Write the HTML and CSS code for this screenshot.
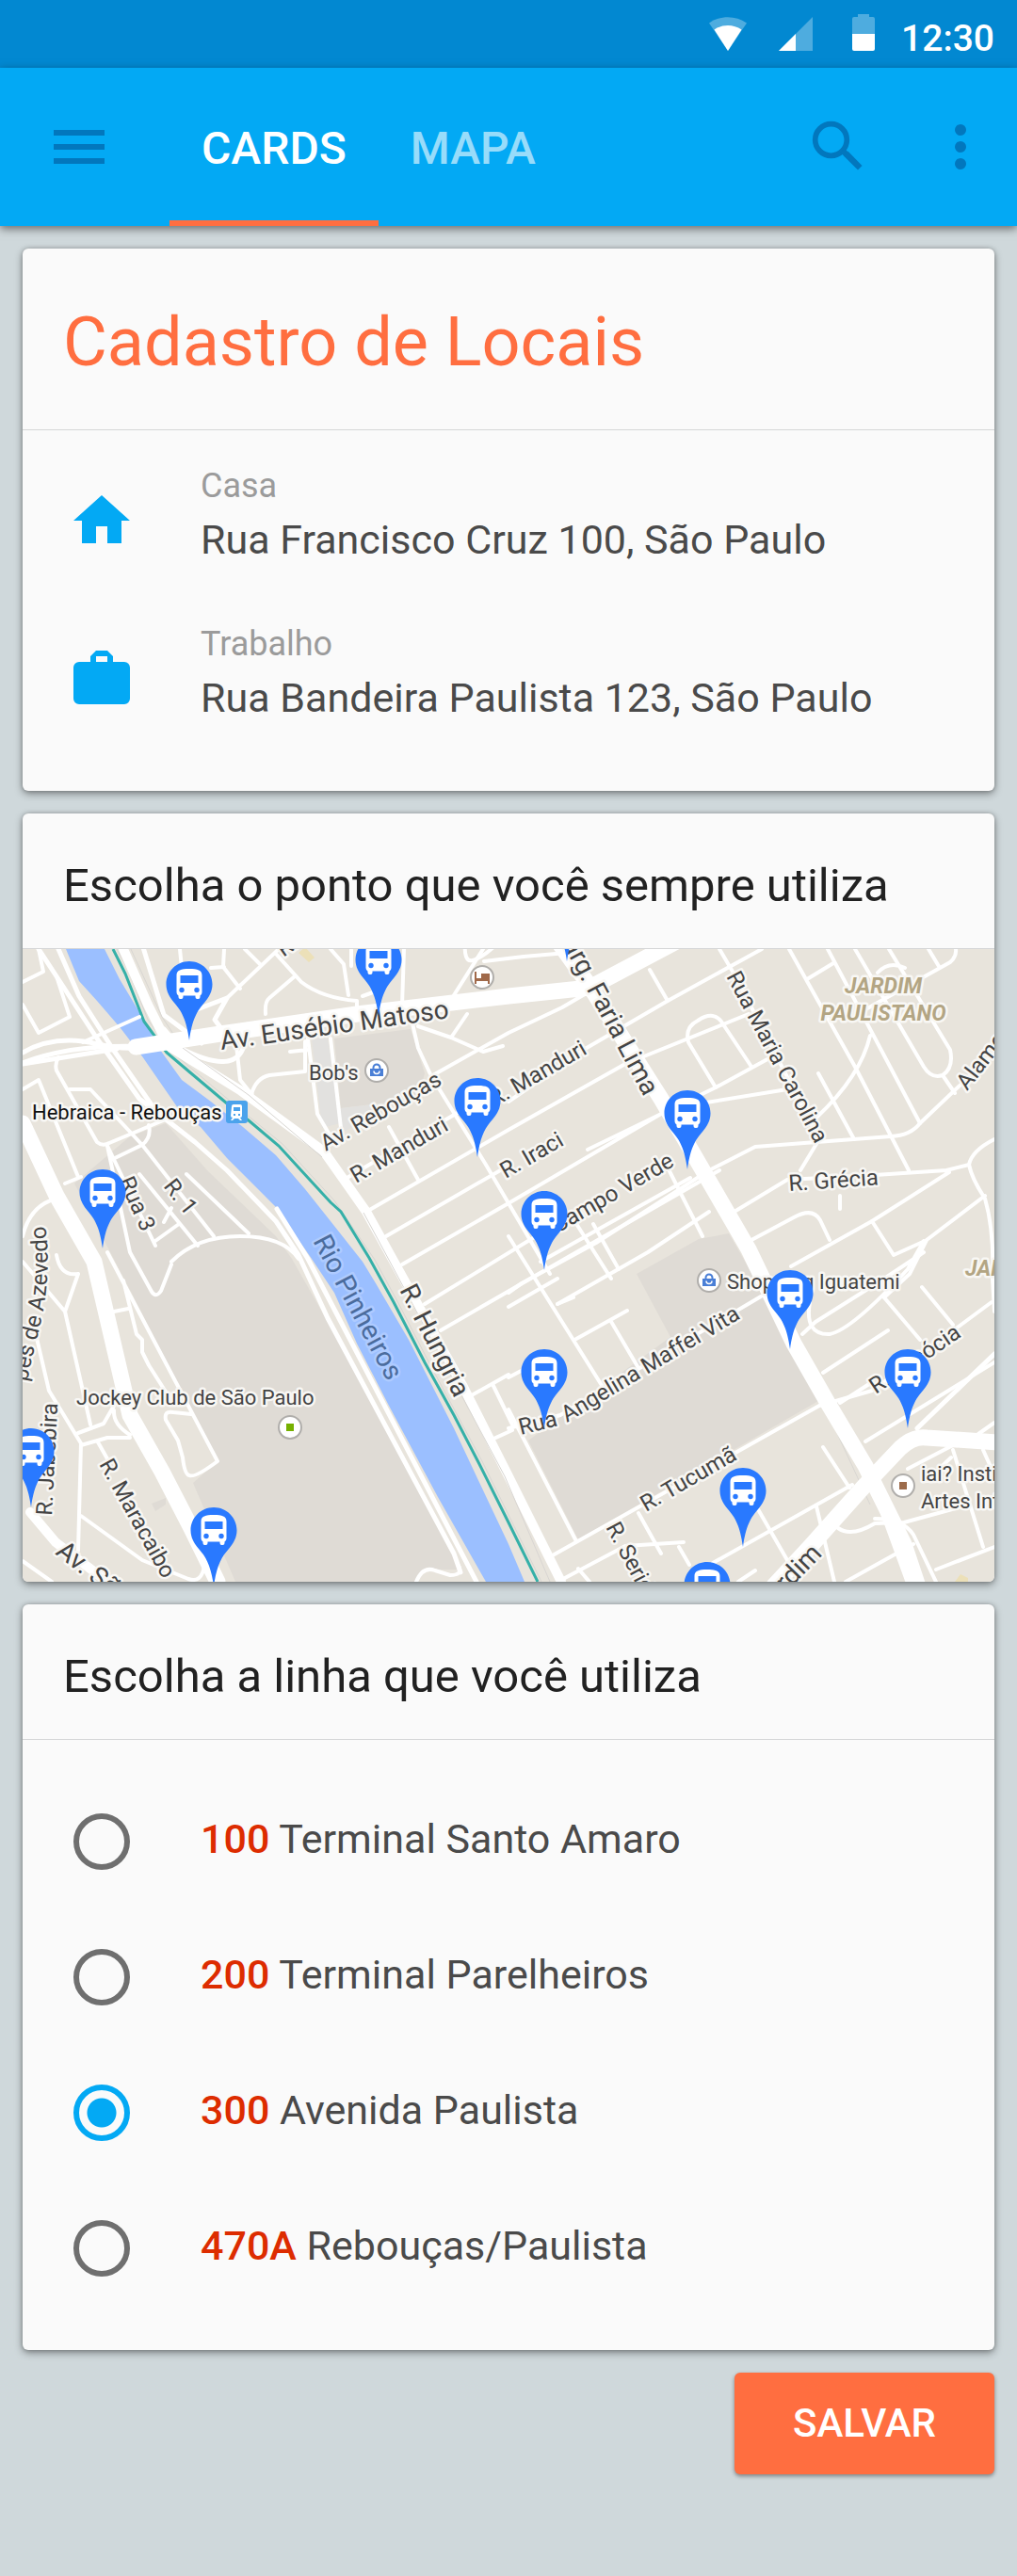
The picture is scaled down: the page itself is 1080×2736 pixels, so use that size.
FILE: index.html
```
<!DOCTYPE html>
<html lang="pt-BR">
<head>
    <meta charset="UTF-8">
    <meta name="viewport" content="width=device-width, initial-scale=1.0">
    <title>Cadastro de Locais</title>
    <link rel="stylesheet" href="styles.css">
</head>
<body>
    <div class="status-bar">
        <svg class="status-wifi" viewBox="0 0 40 36" aria-hidden="true">
            <path class="dim" d="M0 6.5C12-2 28-2 40 6.5L20 36z"/>
            <path d="M5.500 13.500C14 7.500 26 7.500 34.500 13.500L20 36z"/>
        </svg>
        <svg class="status-signal" viewBox="0 0 36 36" aria-hidden="true">
            <path class="dim" d="M36 0v36H0z"/>
            <path d="M18 18v18H0z"/>
        </svg>
        <svg class="status-battery" viewBox="0 0 24 39" aria-hidden="true">
            <path class="dim" d="M6 0h12v3h4a2 2 0 0 1 2 2v16H0V5a2 2 0 0 1 2-2h4z"/>
            <path d="M0 21h24v16a2 2 0 0 1-2 2H2a2 2 0 0 1-2-2z"/>
        </svg>
        <span class="status-time">12:30</span>
    </div>

    <header class="app-bar">
        <button class="icon-button menu" aria-label="Menu">
            <svg viewBox="0 0 24 24"><path d="M3 6h18v2H3zM3 11h18v2H3zM3 16h18v2H3z"/></svg>
        </button>
        <nav class="tabs">
            <a class="tab active" href="#cards">CARDS</a>
            <a class="tab" href="#mapa">MAPA</a>
        </nav>
        <button class="icon-button search" aria-label="Buscar">
            <svg viewBox="0 0 24 24">
                <circle cx="9.500" cy="9.500" r="5.600" fill="none" stroke="currentColor" stroke-width="1.900"/>
                <path d="M14.200 12.800L15.800 13.800L20.500 18.700L19 20.200L14.200 15.400L12.900 13.900z"/>
            </svg>
        </button>
        <button class="icon-button" aria-label="Mais opções">
            <svg viewBox="0 0 24 24"><circle cx="12" cy="6" r="2"/><circle cx="12" cy="12" r="2"/><circle cx="12" cy="18" r="2"/></svg>
        </button>
    </header>

    <main class="content" id="cards">
        <section class="card">
            <h1 class="card-title">Cadastro de Locais</h1>
            <div class="places">
                <div class="place">
                    <svg class="place-icon" viewBox="0 0 24 24" aria-hidden="true"><path d="M10 20v-6h4v6h5v-8h3L12 3 2 12h3v8z"/></svg>
                    <div>
                        <div class="place-label">Casa</div>
                        <div class="place-address">Rua Francisco Cruz 100, São Paulo</div>
                    </div>
                </div>
                <div class="place">
                    <svg class="place-icon" viewBox="0 0 24 24" aria-hidden="true"><path d="M20 6h-4V4l-2-2h-4L8 4v2H4a2 2 0 0 0-2 2v11a2 2 0 0 0 2 2h16a2 2 0 0 0 2-2V8a2 2 0 0 0-2-2zm-6 0h-4V4h4z"/></svg>
                    <div>
                        <div class="place-label">Trabalho</div>
                        <div class="place-address">Rua Bandeira Paulista 123, São Paulo</div>
                    </div>
                </div>
            </div>
        </section>

        <section class="card" id="mapa">
            <h2 class="card-subtitle">Escolha o ponto que você sempre utiliza</h2>
            <svg class="map" viewBox="0 0 1032 672" role="img" aria-label="Mapa dos pontos de ônibus">
                <defs>
                    <symbol id="pin" viewBox="0 0 50 84" overflow="visible">
                        <path fill="#2979ff" d="M25 0C11.300 0 .5 11 .5 24.500C.5 32 4 38 9 44C17 53 22 62 25 84C28 62 33 53 41 44C46 38 49.500 32 49.500 24.500C49.500 11 38.700 0 25 0z"/>
                        <path fill="#fff" d="M11.500 15C11.500 9.500 16 8 25 8S38.500 9.500 38.500 15V33Q38.500 35 36.500 36.500V38Q36.500 40 34.500 40H33.500Q31.500 40 31.500 38V36.500H18.500V38Q18.500 40 16.500 40H15.500Q13.500 40 13.500 38V36.500Q11.500 35 11.500 33z"/>
                        <path fill="#2979ff" d="M15.500 15h19v8h-19z"/>
                        <circle fill="#2979ff" cx="17" cy="30.500" r="2.700"/>
                        <circle fill="#2979ff" cx="33" cy="30.500" r="2.700"/>
                    </symbol>
                    <symbol id="bag" viewBox="0 0 28 28">
                        <circle class="poi" cx="14" cy="14" r="12"/>
                        <path fill="#4a7fd6" d="M7 12h14v8H7z"/>
                        <path fill="none" stroke="#4a7fd6" stroke-width="2" d="M10.500 13v-2a3.500 3.500 0 0 1 7 0v2"/>
                        <path fill="none" stroke="#fff" stroke-width="1.500" d="M11 14.500a3 3 0 0 0 6 0"/>
                    </symbol>
                    <path id="azevedo" d="M5 460C12 420 20 400 24 372C28 340 28 315 22 280"/>
                </defs>

                <rect width="1032" height="672" fill="#e8e4dc"/>

                <!-- blocks -->
                <path fill="#dfdbd5" d="M55 249L114 199L152 185L196 235L269 305L286 329L320 389L465 659H424L417 672H226L181 567L207 544L114 362z"/>
                <path fill="#dfdbd5" d="M652 345L718 308L750 302L786 365L845 480L590 627L537 522L688 412z"/>
                <path fill="#dfdbd5" d="M331 95L412 85L427 132L420 159L338 169z"/>
                <path fill="#e2e1df" d="M307 95H324L338 185L318 190zM338 169L390 163L370 180L338 195z"/>
                <path fill="#dfdbd5" d="M137 589L152 583V590L141 597z"/>
                <path fill="#ece0b8" d="M293 4L300 -2L310 9L304 14zM996 664L1004 668V672H990z"/>

                <!-- river and rail -->
                <path fill="#9bbfff" d="M46 0L60 34L79 55L104 84L127 114L165 169L189 189L217 222L269 274L307 329L331 365L355 419L389 485L441 582L492 672H533L516 632L458 509L410 415L375 355L361 332L327 289L300 255L269 219L234 189L200 162L169 139L146 107L127 72L103 32L87 0z"/>
                <path class="rail-bed" d="M100 0L112 22L133 75L157 108L183 130L221 162L243 180L276 207L297 230L331 267L374 330L398 374L431 438L488 544L551 672"/>
                <path class="rail" d="M96 0L109 26L129 77L153 110L179 132L217 164L240 182L272 209L293 232L327 269L338 279L368 328L394 375L427 439L458 495L484 545L516 609L547 672"/>

                <!-- small streets -->
                <g class="street">
                    <path d="M0 35L22 24L17 0M0 59L17 89L50 72L36 29M64 99L124 72M0 149L17 139L59 242"/>
                    <path d="M38 115Q34 122 36 129L79 205Q85 210 92 206L154 180M134 187Q137 200 127 208L98 222M50 149L72 149L127 208L203 305"/>
                    <path d="M45 249L62 242M90 209L114 322L136 362Q141 372 147 363L158 335M124 239L186 315M174 239L240 302M90 209L141 315M141 310L166 292M150 290L158 275"/>
                    <path d="M158 332Q185 305 231 305T293 329M0 305Q8 272 36 265M167 0L169 20M214 0L213 19L231 42M200 20L214 19M236 0L252 16M269 5L296 35Q318 52 355 55V66M289 29L262 52Q257 56 258 69M217 52L272 0M327 0L341 16L346 49M361 50L372 46M403 60L405 0M458 49L489 0M349 0V18"/>
                    <path d="M413 75L420 105L434 135L492 229L560 345M434 135L516 89L573 62L602 45M420 82L455 94L489 109L510 103M455 94L472 69M470 -10Q468 15 478 12T500 -2M490 13L532 8L578 4"/>
                    <path d="M227 102L231 139L243 154Q248 137 262 134L300 130M300 130V98M284 109L303 107M303 95L313 175L327 199M327 95L338 190M389 189L420 245M341 245L465 172M365 279L516 192L640 122M386 305L516 230M516 162L599 105L685 55L785 0"/>
                    <path d="M403 335L516 270L678 175M427 377L550 302M444 405L548 345L740 235M475 475L516 452M496 522L520 511M475 475L500 525M499 462L520 505M600 213L736 147L791 117M640 122L771 69M714 165L812 149M568 377L664 322L729 279M550 332L709 243"/>
                    <path d="M516 365L530 355L609 312L729 235L778 210L843 205L922 199Q943 198 953 185L1032 110M736 147L707 99Q703 83 717 76Q735 64 744 80L774 125M666 22L685 55M740 0L757 29L846 202L826 235"/>
                    <path d="M754 280L812 245L905 240L981 235L1005 229Q1008 214 1032 202M774 309L819 285Q839 274 847 288L857 309M816 337L902 289L984 237M814 0L843 52L884 125L941 235M855 0L953 185M884 0L957 125Q965 138 977 134Q989 126 985 107L920 0M900 92Q890 135 843 179M845 132L883 202M977 134L990 153M991 0Q992 8 985 14L890 67M908 25Q920 12 937 20M833 32L861 15M962 0L974 20"/>
                    <path d="M1005 229Q1008 244 1022 265Q1032 300 1030 350L1032 385M1022 262L960 309L942 345L915 370M902 289L925 325L956 311M868 262V276M685 232L722 305M585 287L625 350M606 292L633 340M516 305L616 465"/>
                    <path d="M516 380L568 350M568 377L585 370M588 414L642 384M624 394L654 445M516 489L588 629M561 645L846 485L902 469L1029 375M516 509L571 495L784 369M574 669L640 634L702 630M654 599L678 642M590 658L602 672M697 635L708 654M733 652L881 569M895 523L1032 439M850 450L919 405M516 455L535 445M828 409L842 396L915 350L957 322M836 375Q830 410 857 409Q880 405 940 340L957 310"/>
                    <path d="M914 369L953 415M955 359L988 399M850 529L878 572M988 532L1020 635M1020 532L1029 552M940 552L988 527M970 659L1032 635M866 615Q880 625 905 610L936 609L998 592M905 605Q935 605 946 622L970 672M843 592L862 672M781 595L812 649M874 672L946 632M1015 515L1032 503M760 672L778 660M960 565L986 540M868 482L902 460"/>
                    <path d="M0 332L45 385L72 505M45 385L59 345Q40 348 36 325M14 409L28 469L62 525L59 639M59 514L86 504L97 485M62 527L90 519L114 519M97 490Q96 505 114 516M79 522L92 545M62 602L127 649L176 669Q190 674 193 655"/>
                    <path d="M97 385L112 382M107 352L121 409L127 415V428L134 442L155 475M90 322L207 544Q183 562 177 559Q172 558 170 540L165 522L152 500Q150 490 160 492L179 494M0 650L31 672M418 672Q425 655 438 660L454 665Q468 665 463 655"/>
                </g>

                <!-- wider streets -->
                <g class="road">
                    <path d="M17 0L36 29L79 95L124 159L183 205L217 235L269 289L293 325L324 392L458 642L465 662"/>
                    <path d="M38 0L60 50L95 105L140 170M0 110Q35 90 80 101T177 94M270 276L303 329L482 672M0 121Q60 98 150 105M127 -5L150 70L190 100"/>
                    <path d="M167 105Q225 135 235 103M175 68L217 52L204 75L215 90M0 122L100 106M150 85L180 120L236 150L243 154"/>
                    <path d="M890 535L940 672M950 509L1032 430"/>
                </g>
                <g class="highway">
                    <path d="M107 0L133 59L155 103L231 150L320 215L365 279L396 335L468 465L516 560L572 672"/>
                    <path d="M8 598L35 630L90 672"/>
                </g>
                <path class="rail-bed" d="M115 0L148 72L170 105L240 155L318 221M362 280L390 332L512 560L560 672M850 482L900 590"/>
                <g class="avenue">
                    <path d="M120 104L210 90L355 69L516 50L602 41L702 -12"/>
                    <path d="M0 185L36 262L76 332L97 422L114 495L148 555L179 615L207 672"/>
                    <path d="M560 -20L602 39L678 159L709 212L771 319L819 419L855 482L895 549L936 632L952 680"/>
                    <path d="M1036 524L960 519Q946 517 932 530L895 569L836 635L798 676"/>
                </g>

                <!-- street names -->
                <g class="label">
                    <text class="label-large" transform="translate(211 107) rotate(-8)">Av. Eusébio Matoso</text>
                    <text transform="translate(277 9) rotate(-35)">R. </text>
                    <text transform="translate(322 215) rotate(-30)">Av. Rebouças</text>
                    <text transform="translate(354 249) rotate(-30)">R. Manduri</text>
                    <text transform="translate(501 168) rotate(-30)">R. Manduri</text>
                    <text transform="translate(513 244) rotate(-30)">R. Iraci</text>
                    <text transform="translate(568 302) rotate(-30)">Campo Verde</text>
                    <text transform="translate(149 252) rotate(52)">R. 1</text>
                    <text transform="translate(102 246) rotate(66)">Rua 3</text>
                    <text class="label-large" transform="translate(573 -6) rotate(62)">arg. Faria Lima</text>
                    <text transform="translate(747 29) rotate(62)">Rua Maria Carolina</text>
                    <text transform="translate(1003 151) rotate(-52)">Alameda</text>
                    <text transform="translate(814 257) rotate(-4)">R. Grécia</text>
                    <text transform="translate(529 516) rotate(-14)">Rua</text>
                    <text transform="translate(578 503) rotate(-31)">Angelina Maffei Vita</text>
                    <text transform="translate(906 473) rotate(-34)">R. Escócia</text>
                    <text transform="translate(662 598) rotate(-30)">R. Tucumã</text>
                    <text transform="translate(619 614) rotate(62)">R. Seridó</text>
                    <text class="label-large" transform="translate(850 643) rotate(-46)" text-anchor="end">Jardim</text>
                    <text class="label-large" transform="translate(400 362) rotate(63)">R. Hungria</text>
                    <text class="label-water" transform="translate(308 310) rotate(62)">Rio Pinheiros</text>
                    <text><textPath href="#azevedo">pes de Azevedo</textPath></text>
                    <text transform="translate(31 602) rotate(-87)">R. Jabebira</text>
                    <text transform="translate(81 547) rotate(61)">R. Maracaibo</text>
                    <text class="label-large" transform="translate(34 642) rotate(38)">Av. São</text>
                </g>
                <g class="label label-district">
                    <text x="914" y="47" text-anchor="middle">JARDIM</text>
                    <text x="914" y="76" text-anchor="middle">PAULISTANO</text>
                    <text x="1001" y="347">JARDIM</text>
                </g>

                <!-- points of interest -->
                <g class="label label-poi">
                    <text x="304" y="139">Bob's</text>
                    <text x="748" y="361">Shopping Iguatemi</text>
                    <text x="57" y="484">Jockey Club de São Paulo</text>
                    <text x="954" y="565">iai? Instituto</text>
                    <text x="954" y="594">Artes Interativas</text>
                    <text class="label-station" x="10" y="181">Hebraica - Rebouças</text>
                </g>
                <use href="#bag" x="362" y="115" width="28" height="28"/>
                <use href="#bag" x="715" y="338" width="28" height="28"/>
                <circle class="poi" cx="488" cy="30" r="12"/>
                <path fill="#a0694a" d="M480 24h2v7h14v6h-2v-3h-12v3h-2zM487 26h9v5h-9z"/>
                <circle class="poi" cx="284" cy="508" r="12"/>
                <path fill="#76b000" d="M280 504h8v8h-8z"/>
                <circle class="poi" cx="935" cy="570" r="12"/>
                <path fill="#9c6b4b" d="M931 566h8v8h-8z"/>
                <rect x="216" y="161" width="23" height="24" rx="3" fill="#4ba3ec"/>
                <path fill="#fff" fill-rule="evenodd" d="M222 167q0-2 2-2h7q2 0 2 2v10q0 2-2 2l2 3h-2l-2-2h-4l-2 2h-2l2-3q-2 0-2-2zM224 168v4h7v-4zM224 175h2v2h-2zM229 175h2v2h-2z"/>

                <!-- bus stops -->
                <use href="#pin" x="152" y="13" width="50" height="84"/>
                <use href="#pin" x="353" y="-13" width="50" height="84"/>
                <use href="#pin" x="553" y="-71" width="50" height="84"/>
                <use href="#pin" x="458" y="137" width="50" height="84"/>
                <use href="#pin" x="681" y="150" width="50" height="84"/>
                <use href="#pin" x="60" y="234" width="50" height="84"/>
                <use href="#pin" x="529" y="257" width="50" height="84"/>
                <use href="#pin" x="790" y="341" width="50" height="84"/>
                <use href="#pin" x="529" y="425" width="50" height="84"/>
                <use href="#pin" x="915" y="425" width="50" height="84"/>
                <use href="#pin" x="-16" y="509" width="50" height="84"/>
                <use href="#pin" x="740" y="551" width="50" height="84"/>
                <use href="#pin" x="178" y="593" width="50" height="84"/>
                <use href="#pin" x="702" y="651" width="50" height="84"/>
            </svg>
        </section>

        <form class="line-form">
            <section class="card">
                <h2 class="card-subtitle">Escolha a linha que você utiliza</h2>
                <div class="lines">
                    <label class="line">
                        <input type="radio" name="linha" value="100">
                        <span><b>100</b> Terminal Santo Amaro</span>
                    </label>
                    <label class="line">
                        <input type="radio" name="linha" value="200">
                        <span><b>200</b> Terminal Parelheiros</span>
                    </label>
                    <label class="line">
                        <input type="radio" name="linha" value="300" checked>
                        <span><b>300</b> Avenida Paulista</span>
                    </label>
                    <label class="line">
                        <input type="radio" name="linha" value="470A">
                        <span><b>470A</b> Rebouças/Paulista</span>
                    </label>
                </div>
            </section>
            <button class="save" type="submit">SALVAR</button>
        </form>
    </main>
</body>
</html>
```
FILE: styles.css
```
* {
    box-sizing: border-box;
}
body {
    margin: 0;
    min-height: 100vh;
    background: #cfd8db;
    color: #4a4a4a;
    font-family: Roboto, "Noto Sans", sans-serif;
    font-size: 43px;
}
h1, h2 {
    margin: 0;
    font-weight: 400;
}
button {
    border: none;
    font-family: inherit;
    cursor: pointer;
}

/* status bar */
.status-bar {
    display: flex;
    justify-content: flex-end;
    align-items: flex-end;
    height: 72px;
    padding: 0 24px 18px;
    background: #0288d1;
    color: #fff;
}
.status-bar svg {
    fill: #fff;
}
.status-bar .dim {
    opacity: 0.3;
}
.status-wifi {
    width: 40px;
    height: 36px;
    margin-right: 34px;
}
.status-signal {
    width: 36px;
    height: 36px;
    margin-right: 42px;
}
.status-battery {
    width: 24px;
    height: 39px;
    margin-right: 28px;
}
.status-time {
    font-size: 39px;
    font-weight: 500;
    line-height: 26px;
}

/* app bar */
.app-bar {
    display: flex;
    align-items: center;
    height: 168px;
    padding: 0 24px 0 48px;
    background: #03a9f4;
    box-shadow: 0 3px 9px rgba(0, 0, 0, 0.5);
}
.icon-button {
    width: 72px;
    height: 72px;
    padding: 0;
    background: none;
    color: #0277bd;
}
.icon-button svg {
    display: block;
    fill: currentColor;
}
.menu {
    margin-right: 60px;
}
.search {
    margin-left: auto;
    margin-right: 58px;
}
.tabs {
    display: flex;
    align-self: stretch;
}
.tab {
    display: flex;
    align-items: center;
    padding: 8px 34px 0;
    border-bottom: 6px solid transparent;
    color: rgba(255, 255, 255, 0.6);
    font-size: 48px;
    font-weight: 500;
    text-decoration: none;
}
.tab.active {
    border-bottom-color: #ff6e40;
    color: #fff;
}

/* cards */
.content {
    display: flex;
    flex-direction: column;
    gap: 24px;
    padding: 24px;
}
.card {
    overflow: hidden;
    border-radius: 6px;
    background: #fafafa;
    box-shadow: 0 3px 9px rgba(0, 0, 0, 0.4), 0 0 4px rgba(0, 0, 0, 0.2);
}
.card-title {
    padding: 58px 43px 50px;
    border-bottom: 1px solid #d5d6d7;
    color: #ff6e40;
    font-size: 72px;
    line-height: 84px;
}
.card-subtitle {
    padding: 47px 43px 36px;
    border-bottom: 1px solid #d5d6d7;
    color: #212121;
    font-size: 49px;
    line-height: 60px;
}

/* places */
.places {
    display: flex;
    flex-direction: column;
    gap: 54px;
    padding: 32px 48px 69px;
}
.place {
    display: flex;
    align-items: center;
    gap: 69px;
}
.place-icon {
    flex: none;
    width: 72px;
    height: 72px;
    margin-top: 14px;
    fill: #03a9f4;
}
.place-label {
    color: #9b9b9b;
    font-size: 36px;
    line-height: 54px;
}
.place-address {
    line-height: 60px;
}

/* map */
.map {
    display: block;
    width: 100%;
}
.street, .road, .highway, .avenue {
    fill: none;
    stroke: #fff;
    stroke-linecap: round;
    stroke-linejoin: round;
}
.street {
    stroke-width: 4px;
}
.road {
    stroke-width: 5px;
}
.highway {
    stroke-width: 10px;
}
.avenue {
    stroke-width: 17px;
}
.rail {
    fill: none;
    stroke: #35b0a8;
    stroke-width: 3px;
}
.rail-bed {
    fill: none;
    stroke: #d8d6d2;
    stroke-width: 1px;
}
.poi {
    fill: #fff;
    stroke: #b0aeab;
    stroke-width: 2px;
}
.label {
    fill: #444;
    stroke: #f8f7f4;
    stroke-width: 5px;
    stroke-linejoin: round;
    paint-order: stroke;
    font-size: 24px;
}
.label-large {
    font-size: 28px;
}
.label-poi {
    font-size: 22px;
}
.label-station {
    fill: #111;
}
.label-water {
    fill: #4b6c9d;
    stroke: #aecbff;
    font-size: 29px;
}
.label-district {
    fill: #b3a583;
    font-size: 23px;
    font-style: italic;
    font-weight: 700;
}

/* bus lines */
.line-form {
    display: flex;
    flex-direction: column;
    gap: 24px;
}
.lines {
    padding: 36px 54px;
}
.line {
    display: flex;
    align-items: center;
    gap: 75px;
    height: 144px;
    cursor: pointer;
}
.line span {
    padding-bottom: 6px;
}
.line b {
    color: #dd2c00;
    font-weight: 500;
}
.line input {
    appearance: none;
    flex: none;
    width: 60px;
    height: 60px;
    margin: 0;
    border: 6px solid #6f6f6f;
    border-radius: 50%;
}
.line input:checked {
    border-color: #03a9f4;
    background: radial-gradient(circle, #03a9f4 15px, transparent 16px);
}
.save {
    align-self: flex-end;
    padding: 24px 62px;
    border-radius: 6px;
    background: #ff6e40;
    box-shadow: 0 2px 4px rgba(0, 0, 0, 0.4);
    color: #fff;
    font-size: 42px;
    font-weight: 500;
    line-height: 60px;
}
```
